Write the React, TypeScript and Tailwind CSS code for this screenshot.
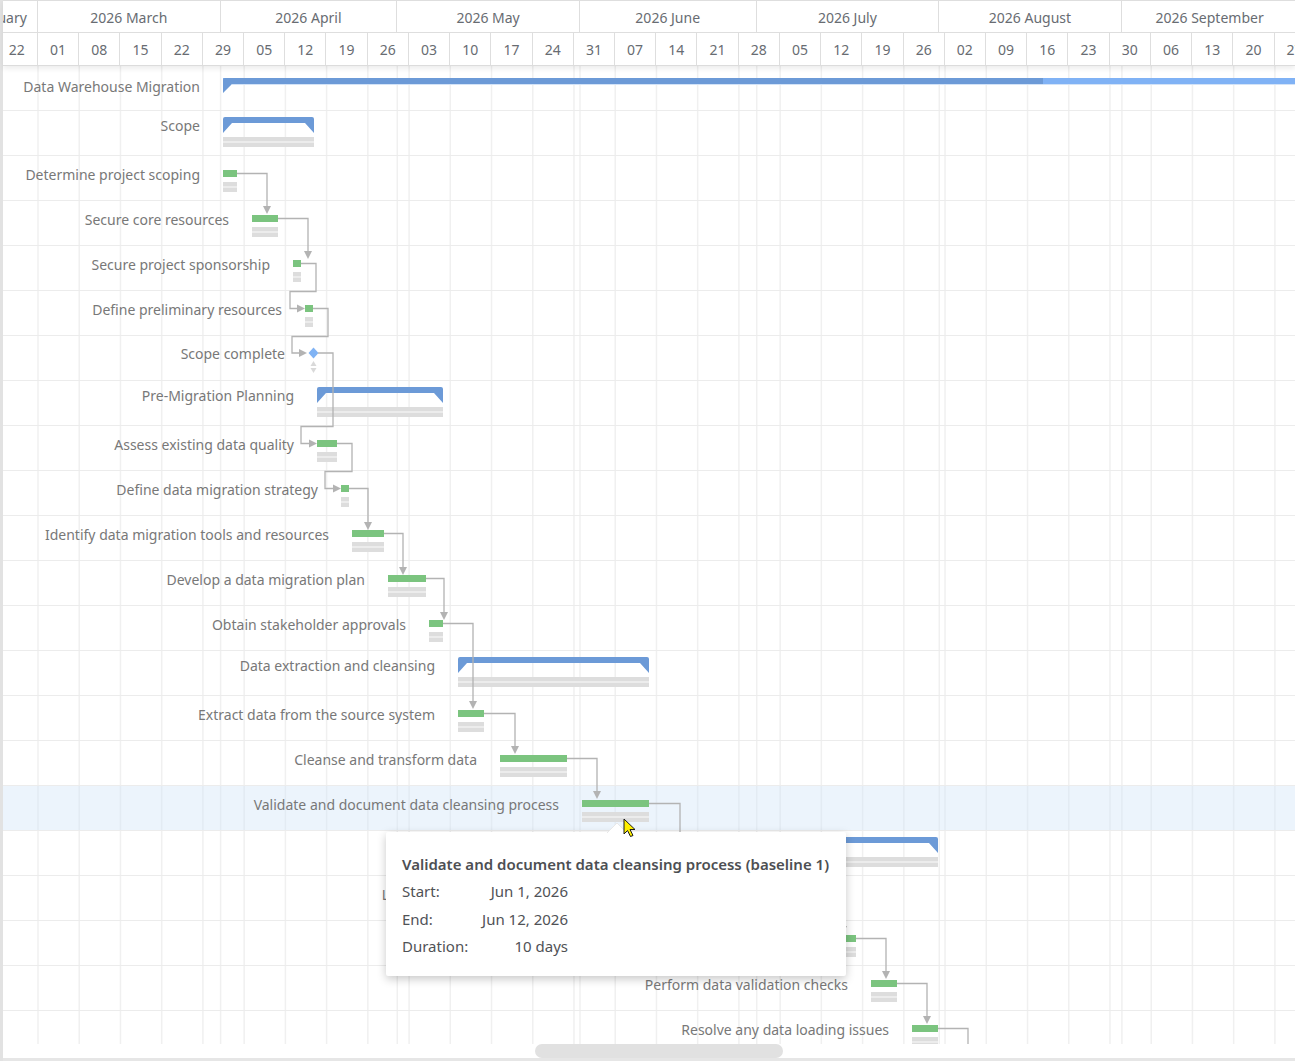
import type { ReactNode } from 'react'

// page coords -> panel coords (3px splitter on the left, header is 66px tall)
const LEFT = 3
const BODY_TOP = 66
const VIEW_W = 1292
const VIEW_H = 978

type Kind = 'project' | 'summary' | 'task' | 'milestone'
type Row = { name: string; kind: Kind; x1: number; x2: number; progress?: number; active?: boolean }

const ROWS: Row[] = [
  { name: 'Data Warehouse Migration', kind: 'project', x1: 223, x2: 1300, progress: 1043 },
  { name: 'Scope', kind: 'summary', x1: 223, x2: 314 },
  { name: 'Determine project scoping', kind: 'task', x1: 223, x2: 237 },
  { name: 'Secure core resources', kind: 'task', x1: 252, x2: 278 },
  { name: 'Secure project sponsorship', kind: 'task', x1: 293, x2: 301 },
  { name: 'Define preliminary resources', kind: 'task', x1: 305, x2: 313 },
  { name: 'Scope complete', kind: 'milestone', x1: 308, x2: 318 },
  { name: 'Pre-Migration Planning', kind: 'summary', x1: 317, x2: 443 },
  { name: 'Assess existing data quality', kind: 'task', x1: 317, x2: 337 },
  { name: 'Define data migration strategy', kind: 'task', x1: 341, x2: 349 },
  { name: 'Identify data migration tools and resources', kind: 'task', x1: 352, x2: 384 },
  { name: 'Develop a data migration plan', kind: 'task', x1: 388, x2: 426 },
  { name: 'Obtain stakeholder approvals', kind: 'task', x1: 429, x2: 443 },
  { name: 'Data extraction and cleansing', kind: 'summary', x1: 458, x2: 649 },
  { name: 'Extract data from the source system', kind: 'task', x1: 458, x2: 484 },
  { name: 'Cleanse and transform data', kind: 'task', x1: 500, x2: 567 },
  { name: 'Validate and document data cleansing process', kind: 'task', x1: 582, x2: 649, active: true },
  { name: 'Data loading and validation', kind: 'summary', x1: 665, x2: 938 },
  { name: 'Load data into the new data warehouse', kind: 'task', x1: 665, x2: 813 },
  { name: 'Verify data completeness and accuracy', kind: 'task', x1: 830, x2: 856 },
  { name: 'Perform data validation checks', kind: 'task', x1: 871, x2: 897 },
  { name: 'Resolve any data loading issues', kind: 'task', x1: 912, x2: 938 },
]

const MONTHS = [
  { label: '2026 February', w: 116 },
  { label: '2026 March', w: 182.6 },
  { label: '2026 April', w: 176.7 },
  { label: '2026 May', w: 182.6 },
  { label: '2026 June', w: 176.7 },
  { label: '2026 July', w: 182.6 },
  { label: '2026 August', w: 182.6 },
  { label: '2026 September', w: 176.7 },
]

const WEEK_W = 41.23
const WEEKS = [
  '15', '22', '01', '08', '15', '22', '29', '05', '12', '19', '26', '03', '10', '17', '24', '31',
  '07', '14', '21', '28', '05', '12', '19', '26', '02', '09', '16', '23', '30', '06', '13', '20', '27',
]
const MONTH_LINES = [220.6, 397.3, 580, 756.7, 939.3, 1121.9]

type Link = { pts: [number, number][]; arrow: 'down' | 'right' | 'none' }
const LINKS: Link[] = [
  { pts: [[237, 173.5], [267, 173.5], [267, 214]], arrow: 'down' },
  { pts: [[278, 218.5], [308, 218.5], [308, 259]], arrow: 'down' },
  { pts: [[301, 263.5], [316, 263.5], [316, 291.5], [290, 291.5], [290, 308.5], [305, 308.5]], arrow: 'right' },
  { pts: [[313, 308.5], [328, 308.5], [328, 336.5], [292, 336.5], [292, 353], [307, 353]], arrow: 'right' },
  { pts: [[318, 353], [333, 353], [333, 426.5], [301, 426.5], [301, 443.5], [317, 443.5]], arrow: 'right' },
  { pts: [[337, 443.5], [352, 443.5], [352, 471.5], [325, 471.5], [325, 488.5], [341, 488.5]], arrow: 'right' },
  { pts: [[349, 488.5], [368, 488.5], [368, 530]], arrow: 'down' },
  { pts: [[384, 533.5], [403, 533.5], [403, 575]], arrow: 'down' },
  { pts: [[426, 578.5], [444, 578.5], [444, 620]], arrow: 'down' },
  { pts: [[443, 623.5], [473, 623.5], [473, 709]], arrow: 'down' },
  { pts: [[484, 713.5], [515, 713.5], [515, 754]], arrow: 'down' },
  { pts: [[567, 758.5], [597, 758.5], [597, 799]], arrow: 'down' },
  { pts: [[649, 803.5], [680, 803.5], [680, 889]], arrow: 'down' },
  { pts: [[813, 893.5], [843, 893.5], [843, 934]], arrow: 'down' },
  { pts: [[856, 938.5], [886, 938.5], [886, 979]], arrow: 'down' },
  { pts: [[897, 983.5], [927, 983.5], [927, 1024]], arrow: 'down' },
  { pts: [[938, 1028.5], [968, 1028.5], [968, 1060]], arrow: 'none' },
]

function Baseline({ className = '' }: { className?: string }) {
  return (
    <div className={`flex flex-col ${className}`}>
      <div className="h-[4px] bg-[#dddddd]" />
      <div className="h-[2px] bg-[#ececec]" />
      <div className="h-[4px] bg-[#dddddd]" />
    </div>
  )
}

function Shape({ row }: { row: Row }) {
  const w = row.x2 - row.x1
  if (row.kind === 'task') {
    return (
      <div className="mt-[14px] flex flex-col" style={{ width: w }}>
        <div className="h-[7px] bg-[#7bc47f]" />
        <Baseline className="mt-[5px]" />
      </div>
    )
  }
  if (row.kind === 'summary') {
    return (
      <div className="mt-[6px] flex flex-col" style={{ width: w }}>
        <svg width={w} height={16} className="block">
          <path d={`M0 2 Q0 0 2 0 H${w - 2} Q${w} 0 ${w} 2 V16 L${w - 9} 6 H9 L0 16 Z`} fill="#6c9ad7" />
        </svg>
        <Baseline className="mt-[4px]" />
      </div>
    )
  }
  if (row.kind === 'milestone') {
    return (
      <div className="mt-[11px] flex flex-col items-center" style={{ width: w + 1 }}>
        <svg width={11} height={12} className="block">
          <polygon points="5.5,0.5 10.5,6 5.5,11.5 0.5,6" fill="#80b3f4" />
        </svg>
        <svg width={7} height={13} className="mt-[2px] block">
          <polygon points="3.5,0 6.5,5 0.5,5" fill="#d9d9d9" />
          <polygon points="0.5,7 6.5,7 3.5,12" fill="#d9d9d9" />
        </svg>
      </div>
    )
  }
  // project: runs off the right edge, darker part is the progress
  const total = 1300 - row.x1
  const done = (row.progress ?? row.x1) - row.x1
  return (
    <div className="mt-[12px]" style={{ width: total }}>
      <svg width={total} height={16} className="block">
        <rect x={0} y={0} width={total} height={6} fill="#80b2f5" />
        <path d={`M0 2 Q0 0 2 0 H${done} V6 H9 L0 15 Z`} fill="#6c9ad7" />
        <rect x={9} y={6} width={total} height={1} fill="#d3e3f7" />
      </svg>
    </div>
  )
}

function GanttRow({ row }: { row: Row }) {
  const pad = {
    project: 'pt-[11px]',
    summary: 'pt-[5px]',
    task: 'pt-[9px]',
    milestone: 'pt-[8px]',
  }[row.kind]
  return (
    <div
      className={`flex h-[45px] shrink-0 border-b border-[#ececec] ${
        row.active ? 'bg-[#cfe3f7]/40' : ''
      }`}
    >
      <div
        className={`flex shrink-0 justify-end whitespace-nowrap text-[14px] leading-[20px] text-[#787878] ${pad}`}
        style={{ width: row.x1 - LEFT - 23 }}
      >
        {row.name}
      </div>
      <div className="ml-[23px] shrink-0">
        <Shape row={row} />
      </div>
    </div>
  )
}

function Header() {
  return (
    <div className="relative z-10 bg-white shadow-[0_3px_5px_rgba(0,0,0,0.07)]">
      <div className="flex h-[33px] overflow-hidden border-y border-[#dedede]">
        <div className="-ml-[81px] flex shrink-0">
          {MONTHS.map((m) => (
            <div
              key={m.label}
              className="flex shrink-0 items-center justify-center whitespace-nowrap border-r border-[#dedede] pt-[1px] text-[14px] text-[#686c72]"
              style={{ width: m.w }}
            >
              {m.label}
            </div>
          ))}
        </div>
      </div>
      <div className="flex h-[33px] overflow-hidden border-b border-[#dcdcdc]">
        <div className="-ml-[47.5px] flex shrink-0">
          {WEEKS.map((d, i) => (
            <div
              key={i}
              className="flex shrink-0 items-center justify-center border-r border-[#dedede] pt-[1px] text-[14px] text-[#686c72]"
              style={{ width: WEEK_W }}
            >
              {d}
            </div>
          ))}
        </div>
      </div>
    </div>
  )
}

function GridLines() {
  const xs: number[] = []
  for (let k = -1; k < 31; k++) xs.push(38 + WEEK_W * k)
  return (
    <svg
      className="absolute inset-0"
      width={VIEW_W}
      height={VIEW_H}
      viewBox={`${LEFT} ${BODY_TOP} ${VIEW_W} ${VIEW_H}`}
    >
      {[...xs, ...MONTH_LINES].map((x, i) => (
        <line key={i} x1={x} y1={BODY_TOP} x2={x} y2={BODY_TOP + VIEW_H} stroke="#f0f0f0" strokeWidth={1.5} />
      ))}
    </svg>
  )
}

function Links() {
  const stroke = '#b3b3b3'
  const out: ReactNode[] = []
  LINKS.forEach((l, i) => {
    const pts = l.pts.map((p) => [...p])
    const last = pts[pts.length - 1]
    if (l.arrow === 'down') last[1] -= 6
    if (l.arrow === 'right') last[0] -= 6
    const d = pts.map((p, j) => `${j ? 'L' : 'M'}${p[0]} ${p[1]}`).join(' ')
    out.push(<path key={`p${i}`} d={d} fill="none" stroke={stroke} strokeWidth={1.3} />)
    const [tx, ty] = l.pts[l.pts.length - 1]
    if (l.arrow === 'down') {
      out.push(<polygon key={`a${i}`} points={`${tx - 4},${ty - 8} ${tx + 4},${ty - 8} ${tx},${ty}`} fill={stroke} />)
    }
    if (l.arrow === 'right') {
      out.push(<polygon key={`a${i}`} points={`${tx - 8},${ty - 4} ${tx - 8},${ty + 4} ${tx},${ty}`} fill={stroke} />)
    }
  })
  return (
    <svg
      className="pointer-events-none absolute inset-0"
      width={VIEW_W}
      height={VIEW_H}
      viewBox={`${LEFT} ${BODY_TOP} ${VIEW_W} ${VIEW_H}`}
    >
      {out}
    </svg>
  )
}

function Tooltip() {
  return (
    <div className="absolute left-[383px] top-[766px] h-[144px] w-[460px] rounded-[2px] bg-white px-[16px] pt-[18px] shadow-[0_3px_10px_rgba(0,0,0,0.22)]">
      {/* caret */}
      <svg width={20} height={10} className="absolute -top-[9px] left-[221px]">
        <polygon points="0,10 10,0 20,10" fill="#ffffff" />
        <polyline points="0,10 10,0 20,10" fill="none" stroke="#e8e8e8" strokeWidth={1} />
      </svg>
      <div className="flex h-[27.5px] items-center whitespace-nowrap text-[15px] font-semibold text-[#4d4f53]">
        Validate and document data cleansing process (baseline 1)
      </div>
      {[
        ['Start:', 'Jun 1, 2026'],
        ['End:', 'Jun 12, 2026'],
        ['Duration:', '10 days'],
      ].map(([k, v]) => (
        <div key={k} className="flex h-[27.5px] w-[166px] items-center justify-between text-[15px] text-[#505256]">
          <span>{k}</span>
          <span>{v}</span>
        </div>
      ))}
    </div>
  )
}

function Cursor() {
  return (
    <svg width={14} height={20} className="absolute left-[620px] top-[752px]">
      <polygon
        points="1,1 1,16 4.5,12.5 7.5,18.5 10,17.5 7,11.5 12,11.5"
        fill="#ffef00"
        stroke="#1a1a1a"
        strokeWidth={1}
        strokeLinejoin="round"
      />
    </svg>
  )
}

export default function App() {
  return (
    <div className="flex h-[1061px] w-[1295px] overflow-hidden bg-white font-['Noto_Sans','Open_Sans',sans-serif]">
      <div className="w-[3px] shrink-0 bg-[#e2e2e2]" />
      <div className="flex w-[1292px] shrink-0 flex-col">
        <Header />

        <div className="relative h-[978px] shrink-0 overflow-hidden">
          <GridLines />
          <div className="relative flex flex-col">
            {ROWS.map((r) => (
              <GanttRow key={r.name} row={r} />
            ))}
          </div>
          <Links />
          <Tooltip />
          <Cursor />
        </div>

        {/* horizontal scrollbar */}
        <div className="flex h-[14px] shrink-0 items-center">
          <div className="ml-[532px] h-[14px] w-[248px] rounded-full bg-[#e1e1e1]" />
        </div>
        <div className="h-[3px] shrink-0 bg-[#e6e6e6]" />
      </div>
    </div>
  )
}
